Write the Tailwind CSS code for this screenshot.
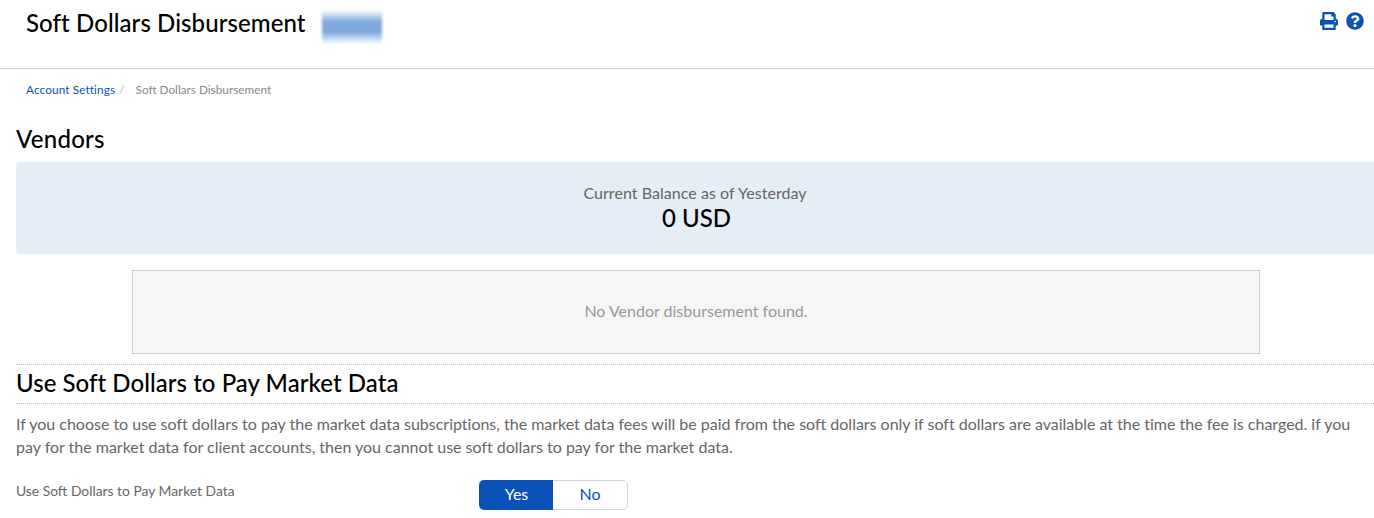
<!DOCTYPE html>
<html><head><meta charset="utf-8"><script src="https://cdn.jsdelivr.net/npm/@tailwindcss/browser@4"></script></head>
<body class="bg-white overflow-hidden font-['Lato','Open_Sans',sans-serif] text-[#666]">
<div class="w-[1374px] h-[518px] overflow-hidden">
<header class="h-[69px] border-b border-[#d4d4d4] flex justify-between pl-[26px] pr-[10px]">
  <div class="flex items-start pt-[9px]">
    <h1 class="text-[24px] leading-[27px] tracking-[0.08px] font-medium text-black">Soft Dollars Disbursement</h1>
    <div class="ml-[16px] mt-[1px] w-[60px] h-[34px] bg-[linear-gradient(to_bottom,#ffffff,#7ea8dc_35%,#7ea8dc_65%,#ffffff)] blur-[1.500px]"></div>
  </div>
  <div class="flex gap-[8px] pt-[12px] text-[#0b52b8]">
    <svg class="w-[18px] h-[18px]" viewBox="0 0 512 512" fill="currentColor"><path d="M448 192V77.25c0-8.49-3.37-16.62-9.37-22.63L393.37 9.37c-6-6-14.14-9.37-22.63-9.37H96C78.33 0 64 14.33 64 32v160c-35.35 0-64 28.65-64 64v112c0 8.84 7.16 16 16 16h48v96c0 17.67 14.33 32 32 32h320c17.67 0 32-14.33 32-32v-96h48c8.84 0 16-7.16 16-16V256c0-35.35-28.65-64-64-64zm-64 256H128v-96h256v96zm0-224H128V64h192v48c0 8.84 7.16 16 16 16h48v96zm48 72c-13.25 0-24-10.75-24-24s10.750-24 24-24 24 10.750 24 24-10.750 24-24 24z"/></svg>
    <svg class="w-[18px] h-[18px]" viewBox="0 0 512 512" fill="currentColor"><path d="M504 256c0 137-111 248-248 248S8 393 8 256 119 8 256 8s248 111 248 248zM262.650 90c-54.500 0-89.260 22.960-116.550 63.770-3.540 5.290-2.350 12.420 2.720 16.270l34.700 26.310c5.200 3.950 12.620 3.010 16.660-2.110 17.860-22.660 30.110-35.790 57.300-35.790 20.430 0 45.700 13.150 45.700 32.960 0 14.980-12.370 22.670-32.540 33.980C247.130 238.530 216 254.940 216 296v4c0 6.630 5.370 12 12 12h56c6.630 0 12-5.370 12-12v-1.330c0-28.460 83.190-29.650 83.190-106.670 0-58-60.170-102-116.530-102zM256 338c-25.360 0-46 20.640-46 46 0 25.360 20.640 46 46 46s46-20.640 46-46c0-25.360-20.640-46-46-46z"/></svg>
  </div>
</header>
<nav class="h-[42px] pl-[26px] flex items-center text-[11.800px] text-[#8a8a8a]">
  <a class="text-[#0b52b8] tracking-[0.1px]">Account Settings</a><span class="ml-[4px] mr-[11px] text-[#bbb]">/</span><span>Soft Dollars Disbursement</span>
</nav>
<main class="pl-[16px]">
  <h2 class="text-[24px] leading-[28px] tracking-[0.25px] font-medium text-black mt-[14px]">Vendors</h2>
  <section class="mt-[9px] h-[92px] bg-[#e5edf7] rounded-l-[4px] flex flex-col items-center pt-[21px]">
    <p class="text-[16px] leading-[20px] tracking-[0.05px] text-[#666]">Current Balance as of Yesterday</p>
    <p class="text-[24px] leading-[28px] font-medium text-black mt-[1px] ml-[3px]">0 USD</p>
  </section>
  <div class="mt-[16px] ml-[116px] w-[1128px] h-[84px] bg-[#f6f6f6] border border-[#ccc] flex items-center justify-center text-[16px] text-[#999] pb-[3px]">No Vendor disbursement found.</div>
  <h2 class="mt-[10px] border-y border-dotted border-[#bbb] h-[40px] flex items-center text-[24px] tracking-[0.05px] font-medium text-black pb-[2px]">Use Soft Dollars to Pay Market Data</h2>
  <p class="mt-[8px] pr-[16px] text-[16px] leading-[23px] tracking-[-0.01px] text-[#666]">If you choose to use soft dollars to pay the market data subscriptions, the market data fees will be paid from the soft dollars only if soft dollars are available at the time the fee is charged. if you pay for the market data for client accounts, then you cannot use soft dollars to pay for the market data.</p>
  <div class="mt-[22px] flex items-start">
    <label class="w-[463px] text-[13.850px] leading-[22px] text-[#666]">Use Soft Dollars to Pay Market Data</label>
    <div class="flex w-[149px] h-[30px] text-[16px]">
      <button class="w-[74px] bg-[#0b52b8] text-white rounded-l-[5px] pb-[2px] pl-[1px]">Yes</button>
      <button class="flex-1 bg-white text-[#0b52b8] border border-l-0 border-[#d4d4d4] rounded-r-[5px] pb-[2px]">No</button>
    </div>
  </div>
</main>
</div>
</body></html>
